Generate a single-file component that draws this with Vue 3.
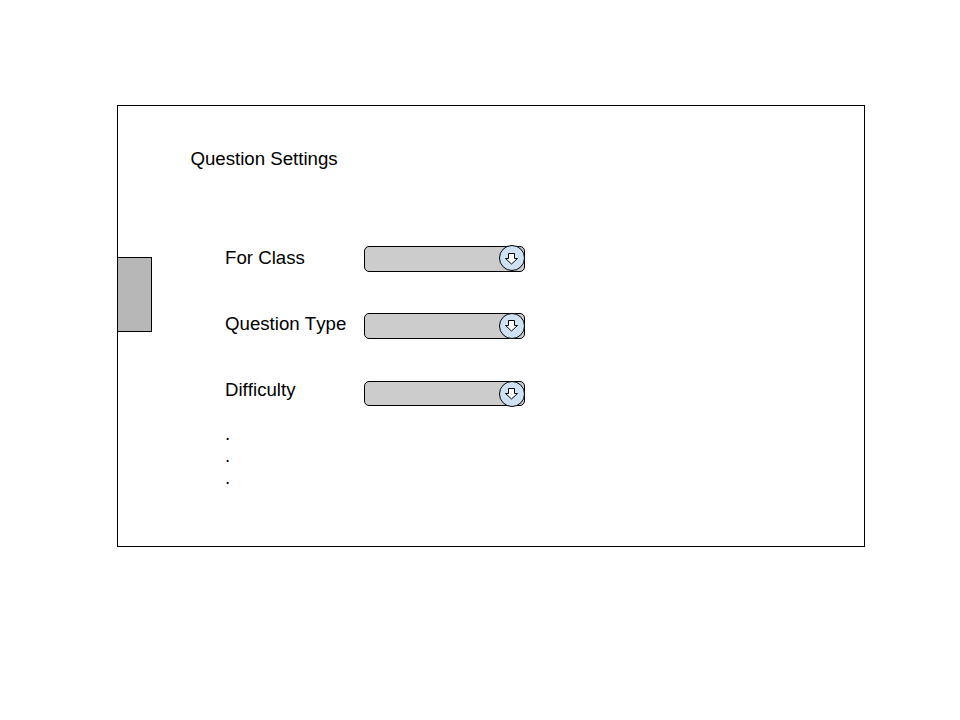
<script setup>
const labels = ['For Class', 'Question Type', 'Difficulty']
</script>

<template>
  <main class="page">
    <section class="frame">
      <aside class="handle"></aside>
      <div class="content">
        <h1 class="title">Question Settings</h1>
        <div class="form">
          <div class="labels">
            <div v-for="label in labels" :key="label" class="label">{{ label }}</div>
            <div class="dots">
              <div v-for="n in 3" :key="n">.</div>
            </div>
          </div>
          <div class="selects">
            <button v-for="label in labels" :key="label" class="select" :aria-label="label">
              <svg class="knob" width="26" height="26" viewBox="0 0 26 26">
                <circle cx="13" cy="13" r="12.5" />
                <path d="M9.5 7.5H15.5V12.5H18.5L12.5 18L6.5 12.5H9.5Z" />
              </svg>
            </button>
          </div>
        </div>
      </div>
    </section>
  </main>
</template>

<style>
body {
  background: #fff;
}
</style>

<style scoped>
.page {
  box-sizing: border-box;
  width: 960px;
  height: 720px;
  padding: 105px 0 0 117px;
  font: 18.67px/22px "Liberation Sans", Arial, sans-serif;
  font-kerning: none;
  color: #000;
}
.frame {
  box-sizing: border-box;
  display: flex;
  width: 748px;
  height: 442px;
  border: 1px solid #000;
}
.handle {
  box-sizing: border-box;
  width: 34px;
  height: 75px;
  margin-top: 151px;
  border: 1px solid #000;
  border-left: 0;
  background: #b7b7b7;
}
.content {
  padding: 42px 0 0 38px;
}
.title {
  margin: 0;
  padding-left: 0.4px;
  font: inherit;
  font-kerning: none;
}
.form {
  display: flex;
  padding: 76px 0 0 35px;
}
.labels {
  display: flex;
  flex-direction: column;
  width: 139px;
  padding-top: 1px;
  white-space: nowrap;
}
.label {
  height: 66px;
}
.dots {
  margin-top: -22px;
}
.selects {
  display: flex;
  flex-direction: column;
}
.select {
  box-sizing: border-box;
  display: flex;
  align-items: flex-start;
  justify-content: flex-end;
  width: 161px;
  height: 26px;
  margin-bottom: 41px;
  padding: 0;
  border: 1px solid #000;
  border-radius: 5px;
  background: #ccc;
}
.select:nth-child(2) {
  margin-bottom: 42px;
}
.select:last-child {
  height: 25px;
}
.knob {
  flex: none;
  margin: -1px -1px 0 0;
}
.select:first-child .knob {
  margin-top: -2px;
}
.knob circle {
  fill: #cfe2f3;
  stroke: #000;
}
.knob path {
  fill: #fff;
  stroke: #000;
}
.select:first-child .knob path {
  transform: translateY(1px);
}
</style>
